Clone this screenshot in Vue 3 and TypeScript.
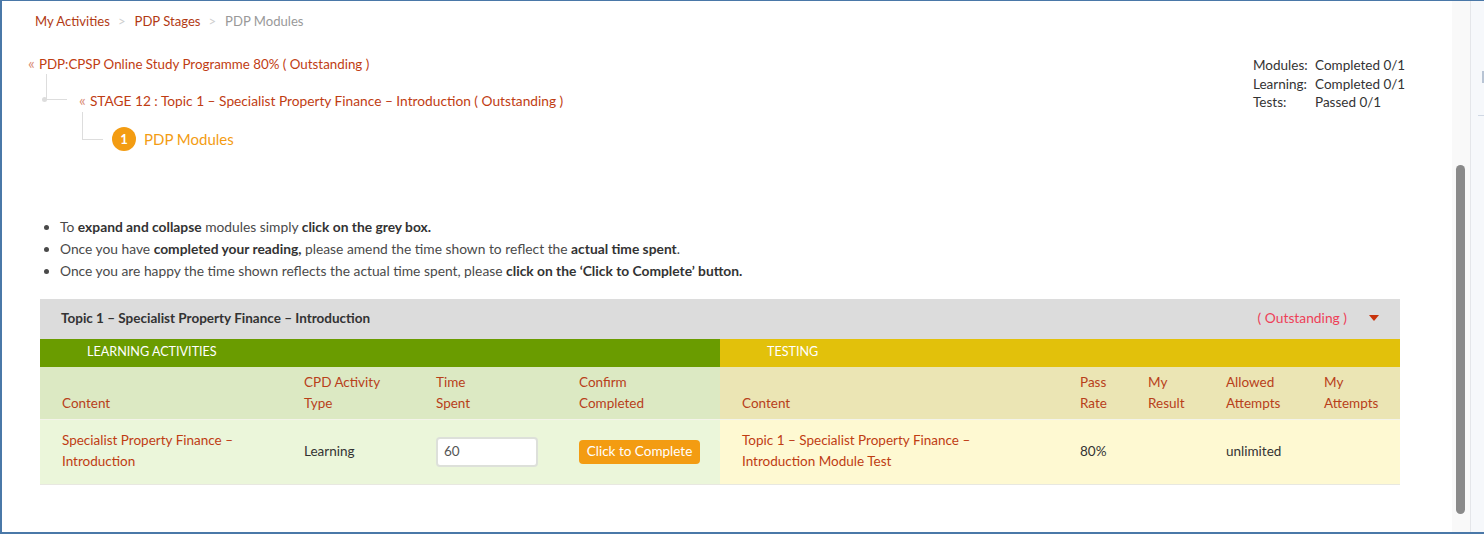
<script setup lang="ts">
interface Stat { label: string; value: string }
const stats: Stat[] = [
  { label: 'Modules:', value: 'Completed 0/1' },
  { label: 'Learning:', value: 'Completed 0/1' },
  { label: 'Tests:', value: 'Passed 0/1' },
]
const learningHead: string[] = ['Content', 'CPD Activity\nType', 'Time\nSpent', 'Confirm\nCompleted']
const testingHead: string[] = ['Content', 'Pass\nRate', 'My\nResult', 'Allowed\nAttempts', 'My\nAttempts']
</script>

<template>
  <div class="frame">
    <main class="page">
      <header class="top">
        <div class="top-left">
          <nav class="crumbs">
            <a>My Activities</a><span class="sep">&gt;</span><a>PDP Stages</a><span class="sep">&gt;</span><span class="cur">PDP Modules</span>
          </nav>
          <div class="tree">
            <div class="t1"><span class="quo">«</span>PDP:CPSP Online Study Programme 80% ( Outstanding )</div>
            <div class="t2"><i class="link-a"></i><i class="dot"></i><span class="quo">«</span>STAGE 12 : Topic 1 – Specialist Property Finance – Introduction ( Outstanding )</div>
            <div class="t3"><i class="link-b"></i><span class="num">1</span><span class="t3-label">PDP Modules</span></div>
          </div>
        </div>
        <dl class="stats">
          <template v-for="s in stats" :key="s.label">
            <dt>{{ s.label }}</dt><dd>{{ s.value }}</dd>
          </template>
        </dl>
      </header>

      <ul class="notes">
        <li>To <b>expand and collapse</b> modules simply <b>click on the grey box.</b></li>
        <li>Once you have <b>completed your reading,</b> please amend the time shown to reflect the <b>actual time spent</b>.</li>
        <li>Once you are happy the time shown reflects the actual time spent, please <b>click on the ‘Click to Complete’ button.</b></li>
      </ul>

      <section class="module">
        <div class="bar">
          <span class="bar-title">Topic 1 – Specialist Property Finance – Introduction</span>
          <span class="bar-status">( Outstanding )</span>
          <i class="caret"></i>
        </div>
        <div class="panels">
          <div class="panel learning">
            <div class="band">LEARNING ACTIVITIES</div>
            <div class="grid head">
              <div v-for="h in learningHead" :key="h" class="cell"><span>{{ h }}</span></div>
            </div>
            <div class="grid body">
              <div class="cell"><a>Specialist Property Finance – Introduction</a></div>
              <div class="cell">Learning</div>
              <div class="cell"><input class="time" value="60" /></div>
              <div class="cell"><button class="complete">Click to Complete</button></div>
            </div>
          </div>
          <div class="panel testing">
            <div class="band">TESTING</div>
            <div class="grid head">
              <div v-for="h in testingHead" :key="h" class="cell"><span>{{ h }}</span></div>
            </div>
            <div class="grid body">
              <div class="cell"><a>Topic 1 – Specialist Property Finance – Introduction Module Test</a></div>
              <div class="cell">80%</div>
              <div class="cell"></div>
              <div class="cell">unlimited</div>
              <div class="cell"></div>
            </div>
          </div>
        </div>
      </section>
    </main>
    <aside class="track"><div class="thumb"></div></aside>
    <div class="edge"><i class="edge-knob"></i><i class="edge-tick"></i></div>
  </div>
</template>

<style>
html, body { margin: 0; background: #fff; }
</style>

<style scoped>
.frame {
  box-sizing: border-box;
  width: 1484px;
  height: 534px;
  display: flex;
  overflow: hidden;
  border: solid #4a78a8;
  border-width: 1px 0 2px 2px;
  background: #fff;
  font-family: "Lato", sans-serif;
  font-size: 13.5px;
  color: #333;
}
.page { width: 1360px; flex: none; padding: 0 52px 0 38px; }
.top { display: flex; justify-content: space-between; height: 215px; }
.crumbs { margin: 12px 0 0 -5px; line-height: 16px; font-size: 13.1px; color: #b23a14; }
.crumbs .sep { color: #cfcfcf; margin: 0 9px 0 8px; }
.crumbs .cur { color: #999; }
.tree { margin: 25px 0 0 -12px; color: #bf3d13; }
.quo { color: #d98b75; font-size: 16px; line-height: 1; margin-right: 4px; }
.t1 { line-height: 20px; font-size: 13.35px; }
.t2 { position: relative; margin: 17px 0 0 51px; line-height: 20px; font-size: 13.72px; }
.link-a { position: absolute; left: -33px; top: -17px; width: 20px; height: 25px; border: solid #ddd; border-width: 0 0 1px 1px; }
.dot { position: absolute; left: -37px; top: 6px; width: 5px; height: 5px; border-radius: 50%; background: #ddd; }
.t3 { position: relative; display: flex; align-items: center; margin: 15px 0 0 84px; height: 26px; color: #f39c12; font-size: 15px; }
.link-b { position: absolute; left: -30px; top: -14px; width: 20px; height: 27px; border: solid #ddd; border-width: 0 0 1px 1px; }
.num { width: 24px; height: 24px; margin-right: 8px; border-radius: 50%; background: #f39c12; color: #fff; font-size: 13px; font-weight: 700; display: flex; align-items: center; justify-content: center; }
.stats { margin: 55px -1px 0 0; width: 148px; flex: none; display: grid; grid-template-columns: 62px auto; line-height: 18.5px; color: #333; align-self: flex-start; white-space: nowrap; }
.stats dt, .stats dd { margin: 0; }
.notes { margin: 0; padding: 0 0 0 20px; line-height: 22px; font-size: 13.8px; color: #4a4a4a; }
.notes b { color: #333; font-weight: 700; }
.module { margin-top: 17px; width: 1360px; }
.bar { display: flex; align-items: center; height: 40px; padding: 0 21px 2px; box-sizing: border-box; background: #dcdcdc; color: #333; }
.bar-title { flex: 1; font-weight: 700; }
.bar-status { color: #ee4058; margin: 0 22px 2px 0; font-size: 13.8px; }
.caret { width: 0; height: 0; border: 5px solid transparent; border-top: 6px solid #c8330c; border-bottom: 0; }
.panels { display: flex; }
.panel { width: 680px; }
.band { height: 28px; line-height: 25px; color: #fff; padding-left: 47px; font-size: 12.6px; }
.grid { display: grid; }
.learning .grid { grid-template-columns: 264px 132px 143px 141px; }
.testing .grid { grid-template-columns: 360px 68px 78px 98px 76px; }
.head { height: 53px; box-sizing: border-box; border-bottom: 1px solid #f4f4ea; color: #b8401a; line-height: 21px; }
.head .cell { display: flex; align-items: flex-end; padding-bottom: 5px; white-space: pre-line; }
.body { height: 65px; box-sizing: border-box; border-bottom: 1px solid #e8e8e0; line-height: 21px; }
.body .cell { display: flex; align-items: center; padding-bottom: 2px; }
.body a { color: #bf3d13; }
.cell { box-sizing: border-box; }
.grid .cell:first-child { padding-left: 22px; padding-right: 44px; }
.learning .band { background: #6a9c00; }
.learning .head { background: #dce9c3; }
.learning .body { background: #ebf6da; }
.testing .band { background: #e2c10b; }
.testing .head { background: #ebe5b4; }
.testing .body { background: #fef9d2; }
.time { box-sizing: border-box; width: 102px; height: 30px; margin-top: 2px; padding: 0 6px 2px; border: 2px solid #dde0da; border-radius: 4px; background: #fff; font: inherit; color: #555; outline: none; }
.complete { box-sizing: border-box; width: 121px; height: 24px; margin-top: 2px; border: 0; padding: 0 0 2px; border-radius: 4px; background: #f39c12; color: #fff; font: inherit; }
.track { width: 18px; flex: none; background: #f9f9f9; position: relative; }
.thumb { position: absolute; left: 4px; top: 164px; width: 9px; height: 349px; border-radius: 5px; background: #8a8a8a; }
.edge { flex: 1; position: relative; background: #f6f8fb; border-left: 1px solid #e4e6ea; }
.edge-knob { position: absolute; right: 0; top: 70px; width: 2px; height: 12px; background: #b8c4d4; }
.edge-tick { position: absolute; right: 0; top: 114px; width: 6px; height: 1px; background: #d0d8e4; }
</style>
